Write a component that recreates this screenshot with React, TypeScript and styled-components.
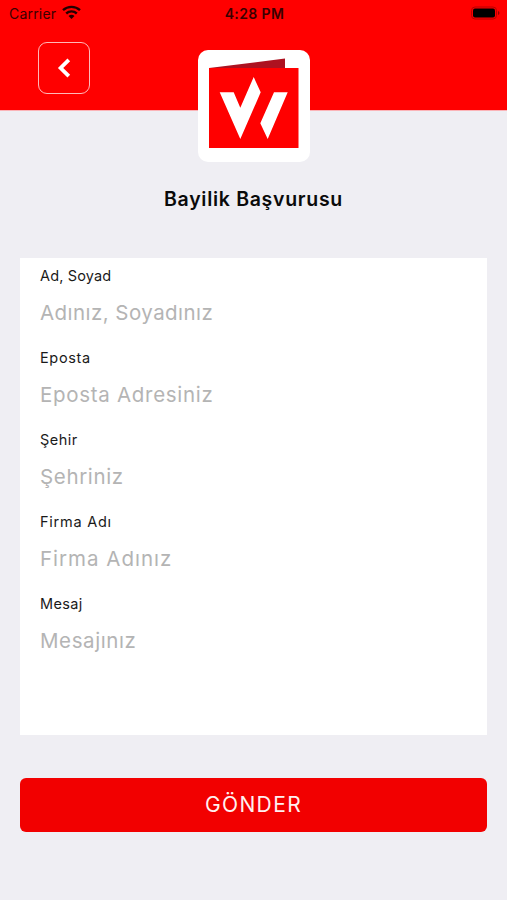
import React from "react";
import styled, { createGlobalStyle } from "styled-components";

const Global = createGlobalStyle`
  * { box-sizing: border-box; }
  body { margin: 0; background: #efeef3; font-family: Inter, "Open Sans", sans-serif; }
`;

const Screen = styled.main`
  width: 100%;
  height: 900px;
  display: flex;
  flex-direction: column;
  background: #efeef3;
  overflow: hidden;
`;

const Header = styled.header`
  height: 111px;
  flex: none;
  display: flex;
  flex-direction: column;
  background: #ff0000;
  border-bottom: 1px solid #fbb3b7;
`;

const StatusBar = styled.div`
  height: 27px;
  padding: 0 7px 0 9px;
  display: grid;
  grid-template-columns: 1fr auto 1fr;
  align-items: center;
  color: #3a0000;
`;

const Carrier = styled.div`
  display: flex;
  align-items: center;
  gap: 6px;
  font-size: 14px;
  letter-spacing: 0.2px;
`;

const Clock = styled.div`
  font-size: 14px;
  font-weight: 600;
  letter-spacing: 0.4px;
`;

const Battery = styled.svg`
  width: 29px;
  height: 14px;
  justify-self: end;
  margin-top: -1px;
`;

const Wifi = styled.svg`
  width: 19px;
  height: 15px;
  margin-top: -2px;
`;

const BackButton = styled.button`
  width: 52px;
  height: 52px;
  margin: 15px 0 0 37.5px;
  padding: 0;
  display: flex;
  align-items: center;
  justify-content: center;
  background: transparent;
  border: 1.5px solid #ffb9b9;
  border-radius: 9px;
`;

const LogoCard = styled.div`
  width: 112px;
  height: 112px;
  flex: none;
  align-self: center;
  margin-top: -61px;
  background: #fff;
  border-radius: 10px;
  overflow: hidden;
`;

const Title = styled.h1`
  margin: 23px 0 0;
  height: 28px;
  line-height: 28px;
  text-align: center;
  font-size: 19.5px;
  font-weight: 600;
  letter-spacing: 0.7px;
  color: #0a0a0a;
`;

const Form = styled.form`
  flex: none;
  margin: 45px 20px 0;
  display: flex;
  flex-direction: column;
`;

const Panel = styled.div`
  height: 477px;
  padding: 7px 20px 0;
  background: #fff;
`;

const Field = styled.label`
  height: 82px;
  display: flex;
  flex-direction: column;
`;

const Caption = styled.span<{ $track: number }>`
  height: 22px;
  line-height: 22px;
  font-size: 14.5px;
  letter-spacing: ${(p) => p.$track}px;
  color: #1a1a1a;
`;

const Input = styled.input<{ $track: number }>`
  height: 50px;
  padding: 0;
  border: 0;
  outline: 0;
  background: transparent;
  font: 400 20.5px Inter, sans-serif;
  letter-spacing: ${(p) => p.$track}px;
  &::placeholder { color: #b4b4b4; opacity: 1; }
`;

const Submit = styled.button`
  height: 54px;
  margin-top: 43px;
  padding: 0 0 1px;
  border: 0;
  border-radius: 6px;
  background: #f20000;
  color: #fff0f0;
  font: 400 21px Inter, sans-serif;
  letter-spacing: 1.4px;
`;

const fields = [
  { label: "Ad, Soyad", hint: "Adınız, Soyadınız", labelTrack: 0.15, hintTrack: 0.45 },
  { label: "Eposta", hint: "Eposta Adresiniz", labelTrack: 0.65, hintTrack: 0.7 },
  { label: "Şehir", hint: "Şehriniz", labelTrack: 0.5, hintTrack: 0.65 },
  { label: "Firma Adı", hint: "Firma Adınız", labelTrack: 0.75, hintTrack: 1 },
  { label: "Mesaj", hint: "Mesajınız", labelTrack: 0.35, hintTrack: 0.6 },
];

export default function App() {
  return (
    <Screen>
      <Global />
      <Header>
        <StatusBar>
          <Carrier>
            Carrier
            <Wifi viewBox="0 0 19 15" fill="none" stroke="#240000" strokeWidth="2.4">
              <path d="M1 5.2C5.7.8 13.3.8 18 5.2M4.2 8.5c3-2.8 7.6-2.8 10.6 0" />
              <path d="M6.500 11c1.700-1.600 4.300-1.600 6 0l-3 3z" fill="#240000" stroke="none" />
            </Wifi>
          </Carrier>
          <Clock>4:28 PM</Clock>
          <Battery viewBox="0 0 29 14">
            <rect x="0.500" y="1" width="25" height="12" rx="3.500" fill="none" stroke="#b80000" />
            <rect x="2" y="2.500" width="22" height="9" rx="2" fill="#000" />
            <path d="M27 5v4q1.500-.6 1.500-2T27 5" fill="#900000" />
          </Battery>
        </StatusBar>
        <BackButton type="button" aria-label="Geri">
          <svg width="16" height="22" viewBox="0 0 16 22" fill="none" stroke="#fff" strokeWidth="3.800">
            <path d="M12.800 2.800 4.600 11l8.200 8.200" />
          </svg>
        </BackButton>
      </Header>
      <LogoCard>
        <svg width="112" height="112" viewBox="0 0 112 112">
          <path d="M11 18 87 8.500V20H11z" fill="#ad1220" />
          <path d="M11 18h89.500v80H11z" fill="#ff0000" />
          <path d="M21.700 42.300h14l6.600 15.400L55.700 27l7 15.300L42.300 89zM76 42.300h13.700L69.700 89l-7.400-15.700z" fill="#fff" />
        </svg>
      </LogoCard>
      <Title>Bayilik Başvurusu</Title>
      <Form>
        <Panel>
          {fields.map((f) => (
            <Field key={f.label}>
              <Caption $track={f.labelTrack}>{f.label}</Caption>
              <Input $track={f.hintTrack} placeholder={f.hint} />
            </Field>
          ))}
        </Panel>
        <Submit type="button">GÖNDER</Submit>
      </Form>
    </Screen>
  );
}
